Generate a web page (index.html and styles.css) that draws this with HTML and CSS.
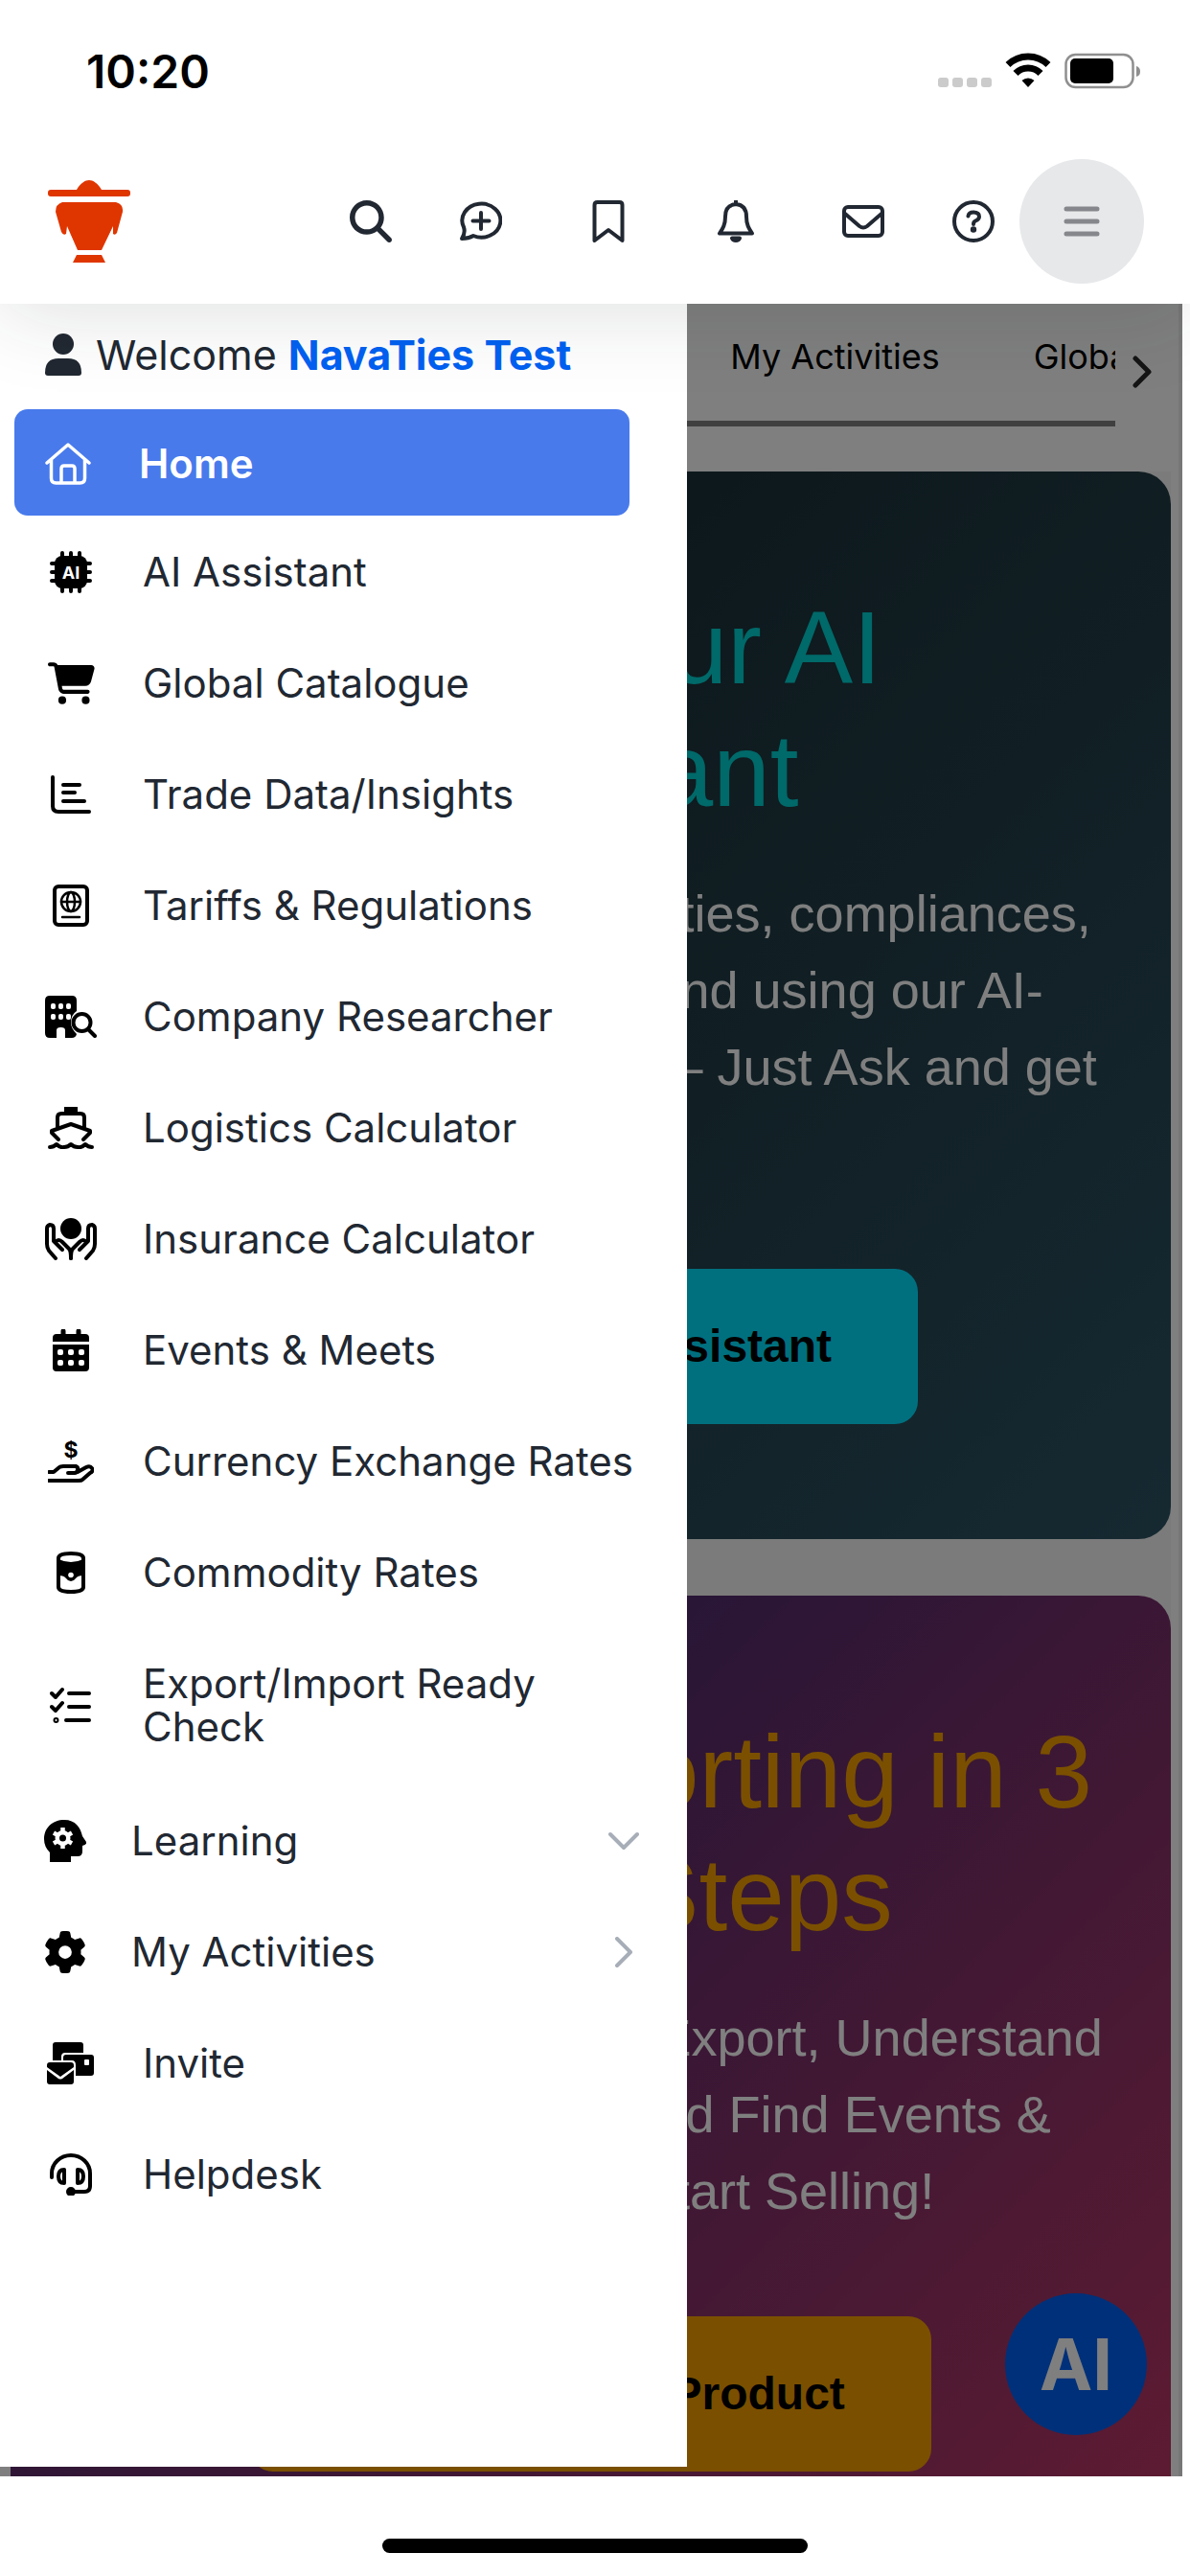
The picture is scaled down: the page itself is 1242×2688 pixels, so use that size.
FILE: index.html
```html
<!DOCTYPE html>
<html lang="en">

<head>
    <meta charset="UTF-8">
    <meta name="viewport" content="width=device-width, initial-scale=1.0">
    <title>NavaTies</title>
    <link rel="stylesheet" href="styles.css">
</head>

<body>
    <header class="top">
        <!-- phone status bar -->
        <div class="status">
            <span class="clock">10:20</span>
            <svg class="status-icons" width="212" height="40" viewBox="0 0 212 40">
                <g fill="#cbcbcb">
                    <rect x="0" y="27" width="11" height="10" rx="3" />
                    <rect x="15" y="27" width="11" height="10" rx="3" />
                    <rect x="30" y="27" width="11" height="10" rx="3" />
                    <rect x="45" y="27" width="11" height="10" rx="3" />
                </g>
                <g fill="none" stroke="#000" stroke-width="7">
                    <path d="M73 13.500A30 30 0 0 1 115 13.500" />
                    <path d="M81 22.500A18 18 0 0 1 107 22.500" />
                </g>
                <path d="M94 37L87.500 30A9.500 9.500 0 0 1 100.500 30Z" />
                <rect x="133.500" y="3" width="70" height="34" rx="10" fill="none" stroke="#8f8f8f" stroke-width="2.500" />
                <rect x="138" y="7" width="45" height="26" rx="5" />
                <path d="M207 15Q211 16 211 20.500Q211 25 207 26Z" fill="#8f8f8f" />
            </svg>
        </div>

        <div class="navbar">
            <a class="brand" href="#" aria-label="NavaTies">
                <svg width="86" height="86" viewBox="0 0 86 86" fill="#df3600">
                    <path d="M30 10C34 3 39 0 43 0S52 3 56 10H83A3 3 0 0 1 86 13V14A3 3 0 0 1 83 17H3A3 3 0 0 1 0 14V13A3 3 0 0 1 3 10Z" />
                    <path d="M15 23H71Q79 25 78 33L72 55Q70 58 68 56L68 48L56 73H31L20 48L19 56Q16 58 14 54L8 33Q8 25 15 23Z" />
                    <path d="M30 78H56L60 86H26Z" />
                </svg>
            </a>
            <div class="tools">
                <button class="tool" aria-label="Search">
                    <svg width="44" height="44" viewBox="0 0 512 512" fill="currentColor">
                        <path d="M416 208c0 45.9-14.9 88.3-40 122.7L502.6 457.4c12.5 12.5 12.5 32.8 0 45.3s-32.8 12.5-45.3 0L330.7 376c-34.4 25.2-76.8 40-122.7 40C93.1 416 0 322.9 0 208S93.1 0 208 0S416 93.1 416 208zM208 352a144 144 0 1 0 0-288 144 144 0 1 0 0 288z" />
                    </svg>
                </button>
                <button class="tool spaced" aria-label="New chat">
                    <svg class="line" width="44" height="44" viewBox="0 0 44 44">
                        <path d="M2 40Q6 34 4 28A20 17.500 0 1 1 14 37Q9 40 2 40Z" />
                        <path d="M22 13V30M13.500 21.500H30.500" />
                    </svg>
                </button>
                <button class="tool spaced" aria-label="Bookmarks">
                    <svg class="line" width="44" height="44" viewBox="0 0 44 44">
                        <path d="M7.500 42V5Q7.500 2 10.500 2H33.500Q36.500 2 36.500 5V42L22 31Z" />
                    </svg>
                </button>
                <button class="tool spaced" aria-label="Notifications">
                    <svg class="line" width="44" height="44" viewBox="0 0 44 44">
                        <path d="M22 1V4M22 4Q11 5 11 17C11 26 8 30 5 34.500H39C36 30 33 26 33 17Q33 5 22 4Z" />
                        <path d="M18 39.500H26Q25 42 22 42T18 39.500Z" fill="currentColor" />
                    </svg>
                </button>
                <button class="tool" aria-label="Messages">
                    <svg class="line" width="44" height="44" viewBox="0 0 44 44">
                        <rect x="2" y="7" width="40" height="30" rx="4" />
                        <path d="M3 14L18 27Q22 30 26 27L41 14" />
                    </svg>
                </button>
                <button class="tool" aria-label="Help">
                    <svg class="line" width="44" height="44" viewBox="0 0 44 44">
                        <circle cx="22" cy="22" r="20" />
                        <path d="M16.500 16.500Q17 12.500 22 12.500Q28 12.500 28 17Q28 20 24 21.500Q22 22.500 22 25" />
                        <circle cx="22" cy="30.500" r="1.200" fill="currentColor" />
                    </svg>
                </button>
            </div>
            <button class="menu-btn" aria-label="Menu">
                <svg width="38" height="34" viewBox="0 0 38 34" stroke="#86878c" stroke-width="5" stroke-linecap="round">
                    <path d="M3 4H35M3 17H35M3 30H35" />
                </svg>
            </button>
        </div>
    </header>

    <main class="stage">
        <div class="tabs">
            <div class="tab-strip">
                <a class="tab" href="#">Home</a>
                <a class="tab" href="#">AI Assistant</a>
                <a class="tab" href="#">My Activities</a>
                <a class="tab" href="#">Global Catalogue</a>
            </div>
            <button class="tab-next" aria-label="Next tabs">
                <svg width="20" height="34" viewBox="0 0 20 34" fill="none" stroke="#2b2b2b" stroke-width="5" stroke-linecap="round" stroke-linejoin="round">
                    <path d="M3 3L17 17L3 31" />
                </svg>
            </button>
        </div>

        <div class="cards">
            <section class="card card-ai">
                <h2>Meet Your AI<br>Assistant</h2>
                <p>Discover export opportunities, compliances,<br>tariffs and market demand using our AI-<br>powered export assistant – Just Ask and get<br>answers</p>
                <button class="cta">Chat with AI Assistant</button>
            </section>
            <section class="card card-export">
                <h2>Explore Exporting in 3<br>Simple Steps</h2>
                <p>Choose What Product to Export, Understand<br>Country Regulations, and Find Events &amp;<br>Business Meets, Start Selling!</p>
                <button class="cta">Find an Export Product</button>
            </section>
        </div>

        <button class="ai-fab">AI</button>
        <div class="backdrop"></div>

        <aside class="sidebar">
            <div class="welcome">
                <svg width="38" height="44" viewBox="0 0 38 44" fill="#212832">
                    <circle cx="19" cy="11" r="11" />
                    <path d="M0 41Q0 26 14 26H24Q38 26 38 41Q38 44 35 44H3Q0 44 0 41Z" />
                </svg>
                <span>Welcome <strong>NavaTies Test</strong></span>
            </div>

            <nav>
                <a class="home" href="#">
                    <svg width="48" height="44" viewBox="0 0 48 44" fill="none" stroke="#fff" stroke-width="3.500" stroke-linecap="round" stroke-linejoin="round">
                        <path d="M2 21L24 2L46 21M6.500 18V37Q6.500 42 11.500 42H36.500Q41.500 42 41.500 37V18M17 41V27Q17 24 20 24H28Q31 24 31 27V41" />
                    </svg>
                    Home
                </a>

                <a class="item" href="#">
                    <svg class="icon" width="44" height="44" viewBox="0 0 44 44">
                        <path d="M13 2V42M22 2V42M31 2V42M2 13H42M2 22H42M2 31H42" stroke="#000" stroke-width="4" stroke-linecap="round" />
                        <rect x="5" y="5" width="34" height="34" rx="8" />
                        <text x="22" y="28.500" text-anchor="middle" class="chip-text">AI</text>
                    </svg>
                    <span>AI Assistant</span>
                </a>
                <a class="item" href="#">
                    <svg class="icon" width="49" height="44" viewBox="0 0 576 512">
                        <path d="M0 24C0 10.7 10.7 0 24 0H69.5c22 0 41.5 12.8 50.600 32h411c26.300 0 45.500 25 38.600 50.400l-41 152.300c-8.500 31.400-37 53.300-69.500 53.300H170.700l5.400 28.500c2.200 11.300 12.100 19.500 23.600 19.500H488c13.300 0 24 10.700 24 24s-10.700 24-24 24H199.700c-34.600 0-64.300-24.600-70.700-58.500L77.400 54.500c-.7-3.800-4-6.500-7.900-6.500H24C10.700 48 0 37.300 0 24zM128 464a48 48 0 1 1 96 0 48 48 0 1 1 -96 0zm336-48a48 48 0 1 1 0 96 48 48 0 1 1 0-96z" />
                    </svg>
                    <span>Global Catalogue</span>
                </a>
                <a class="item" href="#">
                    <svg class="icon stroke" width="44" height="44" viewBox="0 0 44 44">
                        <path d="M3 4V34Q3 40 9 40H41M14 12H31M14 20H26M14 29H36" />
                    </svg>
                    <span>Trade Data/Insights</span>
                </a>
                <a class="item" href="#">
                    <svg class="icon stroke" width="44" height="44" viewBox="0 0 44 44">
                        <rect x="5" y="2" width="34" height="40" rx="4" />
                        <g stroke-width="2.500">
                            <circle cx="22" cy="18" r="10" />
                            <ellipse cx="22" cy="18" rx="4" ry="10" />
                            <path d="M12 18H32M13 34H31" />
                        </g>
                    </svg>
                    <span>Tariffs &amp; Regulations</span>
                </a>
                <a class="item" href="#">
                    <svg class="icon" width="54" height="44" viewBox="0 0 54 44">
                        <path d="M5 0H28Q33 0 33 5V16Q27 20 27 28Q27 34 33 40Q32 44 28 44H21V36Q21 33 16.500 33T12 36V44H5Q0 44 0 39V5Q0 0 5 0Z" />
                        <g fill="#fff">
                            <rect x="6" y="8" width="5" height="6" rx="2" />
                            <rect x="14" y="8" width="5" height="6" rx="2" />
                            <rect x="22" y="8" width="5" height="6" rx="2" />
                            <rect x="6" y="19" width="5" height="6" rx="2" />
                            <rect x="14" y="19" width="5" height="6" rx="2" />
                            <rect x="22" y="19" width="5" height="6" rx="2" />
                        </g>
                        <circle cx="38.500" cy="28" r="9" fill="#fff" stroke="#000" stroke-width="4" />
                        <path d="M45 35L52 42" stroke="#000" stroke-width="4" stroke-linecap="round" />
                    </svg>
                    <span>Company Researcher</span>
                </a>
                <a class="item" href="#">
                    <svg class="icon stroke" width="48" height="44" viewBox="0 0 48 44">
                        <path d="M17 0H31V6H17Z" fill="#000" stroke="none" />
                        <path d="M10 21V11Q10 7 14 7H34Q38 7 38 11V21M11 34L4 27V25L24 18L44 25V27L37 34" />
                        <path d="M2 42Q6 42 9 39Q13 43 17 42Q21 42 24 39Q27 42 31 42Q35 43 39 39Q42 42 46 42" />
                    </svg>
                    <span>Logistics Calculator</span>
                </a>
                <a class="item" href="#">
                    <svg class="icon stroke" width="54" height="44" viewBox="0 0 54 44">
                        <circle cx="27" cy="11" r="11" fill="#000" stroke="none" />
                        <path d="M11 42L4 34Q2 31 2 27V11Q2 8 5 7Q9 7 9 11V24L18 33M11 25Q14 21 18 25L25 32Q27 34 27 42" />
                        <path d="M43 42L50 34Q52 31 52 27V11Q52 8 49 7Q45 7 45 11V24L36 33M43 25Q40 21 36 25L29 32Q27 34 27 42" />
                    </svg>
                    <span>Insurance Calculator</span>
                </a>
                <a class="item" href="#">
                    <svg class="icon" width="38" height="44" viewBox="0 0 38 44">
                        <path d="M11 2V8M27 2V8" stroke="#000" stroke-width="5" stroke-linecap="round" />
                        <path d="M4 5H34Q38 5 38 9V13H0V9Q0 5 4 5ZM0 16H38V40Q38 44 34 44H4Q0 44 0 40Z" />
                        <g fill="#fff">
                            <rect x="5" y="21" width="6" height="6" rx="2" />
                            <rect x="16" y="21" width="6" height="6" rx="2" />
                            <rect x="27" y="21" width="6" height="6" rx="2" />
                            <rect x="5" y="32" width="6" height="6" rx="2" />
                            <rect x="16" y="32" width="6" height="6" rx="2" />
                            <rect x="27" y="32" width="6" height="6" rx="2" />
                        </g>
                    </svg>
                    <span>Events &amp; Meets</span>
                </a>
                <a class="item" href="#">
                    <svg class="icon stroke" width="48" height="44" viewBox="0 0 48 44">
                        <text x="24" y="18" text-anchor="middle" class="coin-text">$</text>
                        <path d="M1 33H6L12 28Q13 27 16 27H29Q32 28 31 31T28 34H21M31 33L40 28Q44 26 46 29T44 34L36 41Q35 42 32 42H1" />
                    </svg>
                    <span>Currency Exchange Rates</span>
                </a>
                <a class="item" href="#">
                    <svg class="icon stroke" width="30" height="44" viewBox="0 0 30 44">
                        <path d="M2 7Q2 2 15 2T28 7V37Q28 42 15 42T2 37Z" />
                        <path d="M2 8Q15 14 28 8V25Q22 25 20 28T15 31T10 28T2 25Z" fill="#000" stroke="none" />
                        <path d="M7 7H23" stroke-width="2" stroke="#fff" />
                        <circle cx="15" cy="24.500" r="2.800" fill="#fff" stroke="none" />
                    </svg>
                    <span>Commodity Rates</span>
                </a>
                <a class="item" href="#">
                    <svg class="icon stroke" width="44" height="44" viewBox="0 0 44 44">
                        <path d="M2 10L6 14L13 6M2 24L6 28L13 20M20 10H41M20 24H41M17 38H41" />
                        <circle cx="6.500" cy="38" r="1" />
                    </svg>
                    <span>Export/Import Ready Check</span>
                </a>

                <div class="group">
                    <a class="item parent" href="#">
                        <svg class="icon" width="44" height="44" viewBox="0 0 44 44">
                            <path d="M21 0C33 0 38 8 40 17L44 23Q45 26 40 27V33Q40 38 35 38H28V44H6V34Q0 28 0 20C0 8 9 0 21 0Z" />
                            <circle cx="19.500" cy="19" r="8" fill="#fff" />
                            <path d="M19.500 8V30M10 13.500L29 24.500M10 24.500L29 13.500" stroke="#fff" stroke-width="4.500" />
                            <circle cx="19.500" cy="19" r="3.500" />
                        </svg>
                        <span>Learning</span>
                        <svg class="caret" width="32" height="20" viewBox="0 0 32 20">
                            <path d="M2 3L16 17L30 3" />
                        </svg>
                    </a>
                    <a class="item parent" href="#">
                        <svg class="icon" width="44" height="44" viewBox="0 0 512 512">
                            <path d="M495.900 166.600c3.200 8.700 .5 18.400-6.400 24.600l-43.300 39.400c1.100 8.300 1.700 16.800 1.700 25.400s-.6 17.100-1.700 25.400l43.300 39.400c6.900 6.200 9.600 15.900 6.400 24.600c-4.400 11.900-9.700 23.300-15.800 34.300l-4.700 8.100c-6.600 11-14 21.400-22.100 31.200c-5.900 7.200-15.700 9.600-24.500 6.800l-55.700-17.700c-13.400 10.300-28.200 18.900-44 25.400l-12.500 57.100c-2 9.100-9 16.300-18.200 17.800c-13.800 2.300-28 3.500-42.500 3.500s-28.700-1.200-42.500-3.500c-9.200-1.500-16.200-8.700-18.200-17.800l-12.500-57.100c-15.800-6.500-30.600-15.100-44-25.400L83.100 425.900c-8.800 2.800-18.600 .3-24.500-6.800c-8.100-9.800-15.500-20.200-22.100-31.200l-4.700-8.100c-6.100-11-11.400-22.400-15.800-34.300c-3.200-8.700-.5-18.400 6.400-24.600l43.300-39.400C64.600 273.100 64 264.600 64 256s.6-17.100 1.700-25.400L22.400 191.200c-6.900-6.200-9.600-15.900-6.400-24.600c4.400-11.900 9.700-23.300 15.800-34.300l4.700-8.100c6.600-11 14-21.400 22.100-31.200c5.900-7.200 15.700-9.600 24.500-6.800l55.700 17.700c13.400-10.300 28.200-18.900 44-25.400l12.500-57.100c2-9.100 9-16.300 18.200-17.800C227.300 1.200 241.500 0 256 0s28.700 1.200 42.500 3.500c9.200 1.500 16.200 8.700 18.200 17.800l12.500 57.100c15.800 6.500 30.600 15.100 44 25.400l55.700-17.700c8.800-2.800 18.600-.3 24.500 6.800c8.100 9.800 15.500 20.200 22.100 31.200l4.700 8.100c6.100 11 11.400 22.400 15.800 34.300zM256 336a80 80 0 1 0 0-160 80 80 0 1 0 0 160z" />
                        </svg>
                        <span>My Activities</span>
                        <svg class="caret" width="32" height="32" viewBox="0 0 32 32">
                            <path d="M9 2L23 16L9 30" />
                        </svg>
                    </a>
                    <a class="item" href="#">
                        <svg class="icon" width="50" height="44" viewBox="0 0 50 44">
                            <path d="M9 0H35Q38 0 38 3V11H19Q15 11 15 15V19H6V3Q6 0 9 0Z" />
                            <path d="M20 13H46Q49 13 49 16V32Q49 35 46 35H30V24Q30 19 26 19H17V16Q17 13 20 13Z" />
                            <rect x="39" y="18" width="5" height="6" rx="1" fill="#fff" />
                            <path d="M3 21H25Q28 21 28 24V26L14 36L0 26V24Q0 21 3 21ZM0 29L12 38Q14 39 16 38L28 29V41Q28 44 25 44H3Q0 44 0 41Z" />
                        </svg>
                        <span>Invite</span>
                    </a>
                    <a class="item" href="#">
                        <svg class="icon stroke" width="44" height="44" viewBox="0 0 44 44">
                            <path d="M2 25V21A20 19 0 0 1 42 21V34Q42 40 36 40H23" />
                            <path d="M15 17V31Q9 31 9 24T15 17ZM29 17V31Q35 31 35 24T29 17Z" />
                            <circle cx="22" cy="40" r="3" fill="#000" />
                        </svg>
                        <span>Helpdesk</span>
                    </a>
                </div>
            </nav>
        </aside>
    </main>

    <footer class="gesture">
        <div class="gesture-bar"></div>
    </footer>
</body>

</html>
```
FILE: styles.css
```css
* {
    box-sizing: border-box;
}

body {
    margin: 0;
    height: 100vh;
    display: flex;
    flex-direction: column;
    overflow: hidden;
    background: #fff;
    color: #212832;
    font-family: Inter, "Liberation Sans", sans-serif;
    font-size: 42px;
    line-height: 45px;
}

a {
    color: inherit;
    text-decoration: none;
}

button {
    padding: 0;
    border: 0;
    background: none;
    color: inherit;
    font: inherit;
}

svg {
    display: block;
    flex: none;
}

/* header */
.top {
    position: relative;
    z-index: 5;
    background: #fff;
    box-shadow: 0 7px 84px rgba(33, 40, 50, 0.15);
}

.status {
    display: flex;
    justify-content: space-between;
    align-items: center;
    height: 144px;
    padding: 4px 51px 0 90px;
}

.clock {
    color: #000;
    font-size: 48px;
    font-weight: 600;
}

.navbar {
    display: flex;
    align-items: center;
    height: 173px;
    padding: 0 48px 0 50px;
}

.tools {
    display: flex;
    gap: 27px;
    margin: 0 4px 0 auto;
}

.tool {
    display: flex;
    justify-content: center;
    width: 88px;
}

.spaced {
    margin-right: 18px;
}

.line {
    fill: none;
    stroke: currentColor;
    stroke-width: 4;
    stroke-linecap: round;
    stroke-linejoin: round;
}

.menu-btn {
    display: flex;
    justify-content: center;
    align-items: center;
    width: 130px;
    height: 130px;
    border-radius: 50%;
    background: #e7e8ea;
}

/* page behind the menu */
.stage {
    position: relative;
    flex: 1;
    min-height: 0;
    margin-right: 8px;
    overflow: hidden;
    box-shadow: inset -4px 0 #eee;
}

.tabs {
    display: flex;
    padding: 0 4px 0 11px;
    margin-bottom: 47px;
    color: #000;
    font-size: 36px;
}

.tab-strip {
    display: flex;
    flex: 1;
    gap: 98px;
    height: 128px;
    padding: 33px 0 0 254px;
    overflow: hidden;
    white-space: nowrap;
    border-bottom: 6px solid #808080;
}

.tab-next {
    display: flex;
    justify-content: center;
    align-items: center;
    width: 56px;
    height: 128px;
    margin-right: 10px;
    padding-top: 14px;
}

.cards {
    display: flex;
    flex-direction: column;
    gap: 59px;
    margin: 0 12px 0 11px;
    background: #f6f6f6;
}

.card {
    padding: 120px 0;
    border-radius: 34px;
    color: #fff;
    font-family: "Liberation Sans", Arial, sans-serif;
    text-align: center;
    white-space: nowrap;
}

.card-ai {
    background: linear-gradient(135deg, #0f2027, #203a43, #2c5364);
}

.card-export {
    background: linear-gradient(135deg, #1d2671, #c33764);
}

.card h2 {
    margin: 0 0 45px;
    font-size: 107px;
    font-weight: 400;
    line-height: 128px;
}

.card-ai h2 {
    color: #00d2d3;
}

.card-export h2 {
    color: #f59f00;
}

.card p {
    margin: 0 0 91px;
    font-size: 54px;
    line-height: 80px;
}

.cta {
    padding: 53px 90px;
    border-radius: 24px;
    color: #000;
    font-size: 48px;
    font-weight: 700;
    line-height: 56px;
}

.card-ai .cta {
    background: #00e0ff;
}

.card-export .cta {
    background: #f59f00;
}

.ai-fab {
    position: absolute;
    right: 37px;
    bottom: 43px;
    width: 148px;
    height: 148px;
    border-radius: 50%;
    background: #0061f2;
    color: #fff;
    font-size: 74px;
    font-weight: 700;
}

.backdrop {
    position: absolute;
    inset: 0;
    background: rgba(0, 0, 0, 0.5);
}

/* slide-in menu */
.sidebar {
    position: absolute;
    top: 0;
    bottom: 10px;
    left: 0;
    width: 717px;
    background: #fff;
}

.welcome {
    display: flex;
    gap: 15px;
    height: 110px;
    padding: 31px 0 0 47px;
    font-size: 43px;
}

.welcome strong {
    color: #0061f2;
}

.home {
    display: flex;
    align-items: center;
    gap: 50px;
    height: 111px;
    margin: 0 60px 0 15px;
    padding: 2px 0 0 32px;
    border-radius: 14px;
    background: #487aec;
    color: #fff;
    font-weight: 600;
}

.item {
    display: grid;
    grid-template-columns: 60px 1fr;
    column-gap: 45px;
    align-items: center;
    padding: 36px 44px 35px 44px;
}

.parent {
    grid-template-columns: 60px 1fr auto;
    column-gap: 39px;
    padding: 36px 50px 35px 38px;
}

.icon {
    justify-self: center;
}

.stroke {
    fill: none;
    stroke: #000;
    stroke-width: 4;
    stroke-linecap: round;
    stroke-linejoin: round;
}

.chip-text {
    fill: #fff;
    font-size: 18px;
    font-weight: 700;
}

.coin-text {
    fill: #000;
    stroke: none;
    font-size: 23px;
    font-weight: 700;
}

.caret {
    fill: none;
    stroke: #a7aeb8;
    stroke-width: 4;
    stroke-linecap: round;
    stroke-linejoin: round;
}

.group {
    margin-top: 3px;
}

/* home indicator */
.gesture {
    display: flex;
    justify-content: center;
    height: 104px;
    padding-top: 65px;
    background: #fff;
}

.gesture-bar {
    width: 444px;
    height: 15px;
    border-radius: 8px;
    background: #000;
}
```
